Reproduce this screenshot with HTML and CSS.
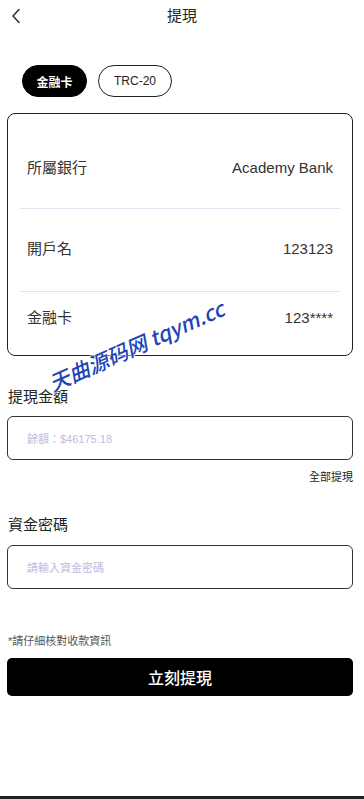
FILE: index.html
```html
<!DOCTYPE html>
<html lang="zh-Hant">
<head>
<meta charset="utf-8">
<meta name="viewport" content="width=device-width, initial-scale=1">
<title>提現</title>
<link rel="stylesheet" href="styles.css">
</head>
<body>
<div class="page">
  <header class="header">
    <svg class="back" width="12" height="16" viewBox="0 0 12 16"><polyline points="8,1.5 2,8 8,14.5" fill="none" stroke="#333" stroke-width="1.6" stroke-linecap="round" stroke-linejoin="round"/></svg>
    <h1 class="title">提現</h1>
  </header>

  <main class="content">
    <div class="tabs">
      <button class="tab active">金融卡</button>
      <button class="tab">TRC-20</button>
    </div>

    <section class="card">
      <div class="row row-1"><span>所屬銀行</span><span class="val">Academy Bank</span></div>
      <div class="divider"></div>
      <div class="row row-2"><span>開戶名</span><span class="val">123123</span></div>
      <div class="divider"></div>
      <div class="row row-3"><span>金融卡</span><span class="val">123****</span></div>
    </section>

    <div class="label first">提現金額</div>
    <div class="input"><span class="placeholder">餘額：$46175.18</span></div>
    <div class="all">全部提現</div>

    <div class="label second">資金密碼</div>
    <div class="input"><span class="placeholder">請輸入資金密碼</span></div>

    <p class="note">*請仔細核對收款資訊</p>
    <button class="submit">立刻提現</button>
  </main>

  <div class="watermark">天曲源码网 tqym.cc</div>
  <div class="home-bar"></div>
</div>
</body>
</html>
```
FILE: styles.css
```css
* { box-sizing: border-box; }
html, body { margin: 0; padding: 0; background: #fff; }
body {
  font-family: "Liberation Sans", "Noto Sans CJK TC", sans-serif;
  color: #222;
}
.page {
  position: relative;
  min-height: 100vh;
  display: flex;
  flex-direction: column;
}
.header {
  position: relative;
  height: 32px;
  display: flex;
  align-items: center;
  justify-content: center;
}
.back {
  position: absolute;
  left: 11px;
  top: 8px;
}
.title {
  margin: 0;
  font-size: 15px;
  font-weight: 400;
  line-height: 20px;
  color: #222;
}
.content {
  padding: 0 11px 0 7px;
  display: flex;
  flex-direction: column;
}
.tabs {
  display: flex;
  gap: 11px;
  margin-top: 33px;
  padding-left: 15px;
}
.tab {
  height: 32px;
  border-radius: 16px;
  border: 1px solid #222;
  background: #fff;
  color: #222;
  font-family: "Liberation Sans", "Noto Sans CJK TC", sans-serif;
  font-size: 12px;
  padding: 0;
  width: 74px;
}
.tab.active {
  width: 65px;
  background: #000;
  border-color: #000;
  color: #fff;
  font-weight: 700;
}
.card {
  margin-top: 16px;
  border: 1px solid #222;
  border-radius: 8px;
  display: flex;
  flex-direction: column;
}
.row {
  display: flex;
  justify-content: space-between;
  align-items: center;
  padding: 0 19px;
  font-size: 15px;
  line-height: 20px;
  color: #333;
}
.row .val { color: #333; }
.row-1 { padding-top: 44px; padding-bottom: 30px; }
.row-2 { padding-top: 30px; padding-bottom: 32px; }
.row-3 { padding-top: 16px; padding-bottom: 27px; }
.divider {
  height: 1px;
  margin: 0 12px;
  background: #e2e2f2;
}
.label {
  font-size: 15px;
  line-height: 22px;
  color: #222;
  padding-left: 1px;
}
.label.first { margin-top: 30px; }
.label.second { margin-top: 28px; }
.input {
  margin-top: 8px;
  height: 44px;
  border: 1px solid #333;
  border-radius: 6px;
  display: flex;
  align-items: center;
  padding-left: 19px;
}
.label.second + .input { margin-top: 9px; }
.placeholder {
  font-size: 11px;
  color: #bcbcdf;
}
.all {
  margin-top: 8px;
  text-align: right;
  font-size: 11px;
  line-height: 18px;
  color: #222;
}
.note {
  margin: 43px 0 0 0;
  font-size: 11px;
  line-height: 18px;
  color: #555;
  padding-left: 1px;
}
.submit {
  margin-top: 8px;
  height: 38px;
  border: none;
  border-radius: 5px;
  background: #000;
  color: #fff;
  font-family: "Liberation Sans", "Noto Sans CJK TC", sans-serif;
  font-size: 16px;
  font-weight: 500;
}
.watermark {
  position: absolute;
  left: 136px;
  top: 345px;
  transform: translate(-50%, -50%) rotate(-24deg);
  white-space: nowrap;
  font-family: "Noto Sans CJK SC", sans-serif;
  font-style: italic;
  font-weight: 500;
  font-size: 21px;
  color: #1d45b6;
  text-shadow: 0 0 2px #fff, 0 0 2px #fff, 0 0 3px #fff;
}
.home-bar {
  margin-top: auto;
  height: 3px;
  background: #222;
}
```
